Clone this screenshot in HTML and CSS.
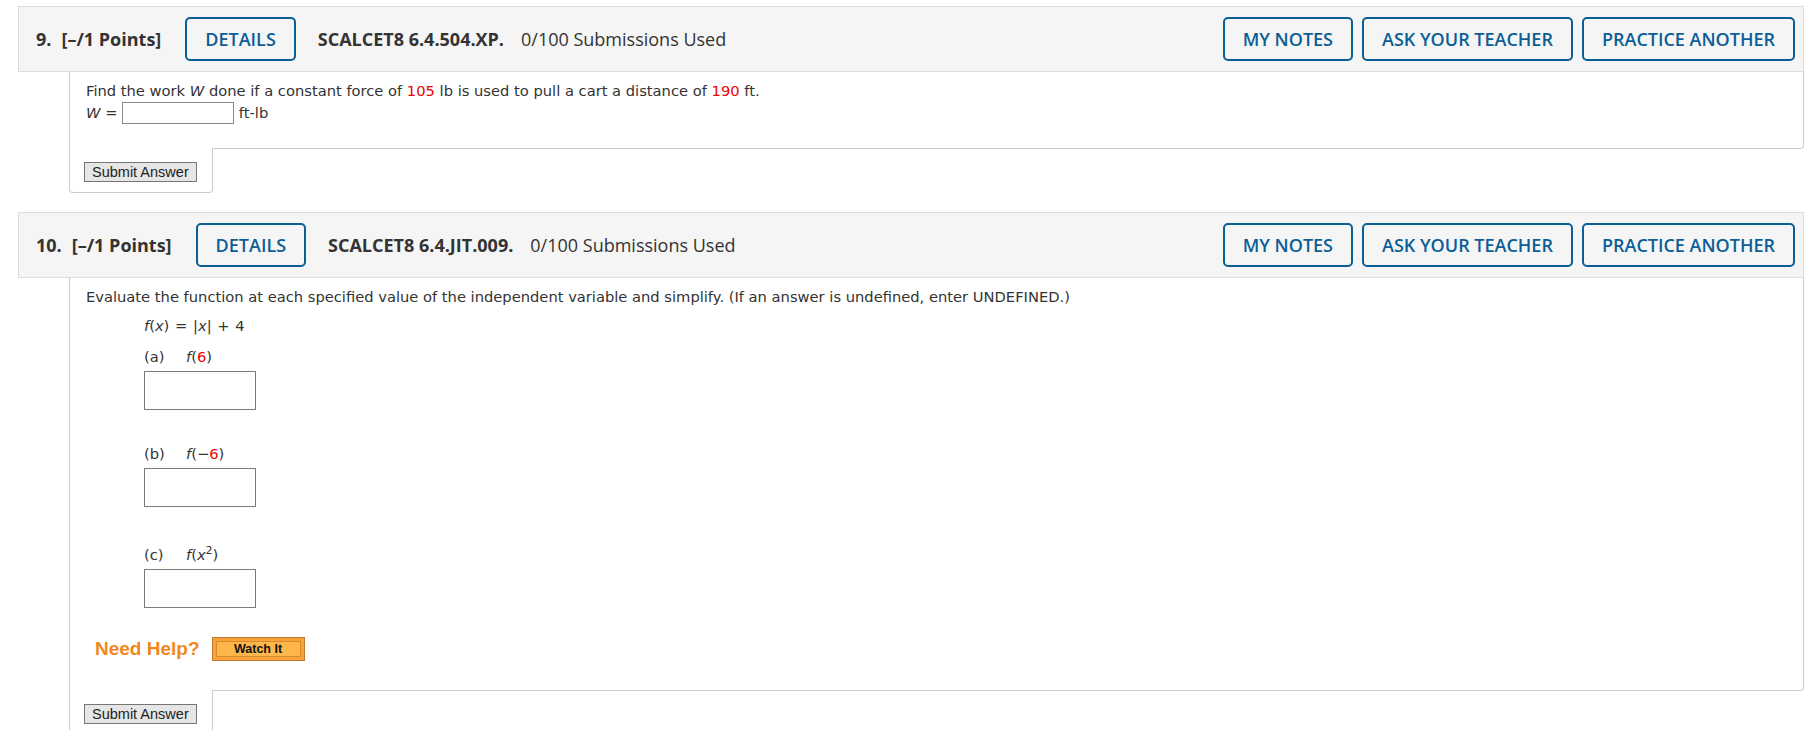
FILE: index.html
```html
<!DOCTYPE html>
<html lang="en">
  <head>
    <meta charset="UTF-8" />
    <title>Assignment</title>
    <link rel="stylesheet" href="styles.css">
  </head>
  <body>
    <!-- QUESTION 9 -->
    <div class="question">
      <div class="qhead">
        <span class="qnum">9.</span>
        <span class="qpts">[–/1 Points]</span>
        <button class="hbtn details">DETAILS</button>
        <span class="qcode">SCALCET8 6.4.504.XP.</span>
        <span class="qsubs">0/100 Submissions Used</span>
        <div class="hright">
          <button class="hbtn">MY NOTES</button>
          <button class="hbtn">ASK YOUR TEACHER</button>
          <button class="hbtn">PRACTICE ANOTHER</button>
        </div>
      </div>
      <div class="qbody q9">
        <div class="line">Find the work <i>W</i> done if a constant force of <span class="red">105</span> lb is used to pull a cart a distance of <span class="red">190</span> ft.</div>
        <div class="line answer-line"><i>W</i>&nbsp;=&nbsp;<input class="small-input" type="text" />&nbsp;ft-lb</div>
      </div>
      <div class="qfoot">
        <button class="submit">Submit Answer</button>
      </div>
    </div>

    <!-- QUESTION 10 -->
    <div class="question">
      <div class="qhead">
        <span class="qnum">10.</span>
        <span class="qpts">[–/1 Points]</span>
        <button class="hbtn details">DETAILS</button>
        <span class="qcode">SCALCET8 6.4.JIT.009.</span>
        <span class="qsubs">0/100 Submissions Used</span>
        <div class="hright">
          <button class="hbtn">MY NOTES</button>
          <button class="hbtn">ASK YOUR TEACHER</button>
          <button class="hbtn">PRACTICE ANOTHER</button>
        </div>
      </div>
      <div class="qbody q10">
        <div class="line">Evaluate the function at each specified value of the independent variable and simplify. (If an answer is undefined, enter UNDEFINED.)</div>
        <div class="math">
          <div class="line func"><i>f</i>(<i>x</i>) = |<i>x</i>| + 4</div>

          <div class="part part-a">
            <div class="line"><span class="plabel">(a)</span><i>f</i>(<span class="red">6</span>)</div>
            <input class="box-input" type="text" />
          </div>

          <div class="part part-b">
            <div class="line"><span class="plabel">(b)</span><i>f</i>(−<span class="red">6</span>)</div>
            <input class="box-input" type="text" />
          </div>

          <div class="part part-c">
            <div class="line"><span class="plabel">(c)</span><i>f</i>(<i>x</i><sup>2</sup>)</div>
            <input class="box-input" type="text" />
          </div>
        </div>

        <div class="help">
          <span class="need-help">Need Help?</span>
          <button class="watch"><span>Watch It</span></button>
        </div>
      </div>
      <div class="qfoot">
        <button class="submit">Submit Answer</button>
      </div>
    </div>
  </body>
</html>
```

FILE: styles.css
```css
html,
body {
  margin: 0;
  background: #fff;
}

body {
  padding: 6px 11px 0 18px;
  font-family: "DejaVu Sans", Verdana, sans-serif;
  font-size: 14.7px;
  color: #333;
}

.question {
  margin-bottom: 19px;
}

/* header bar */
.qhead {
  display: flex;
  align-items: center;
  height: 64px;
  padding: 0 8px 0 17px;
  background-color: #f5f5f5;
  border: 1px solid #dcdcdc;
  font-family: "Open Sans", sans-serif;
  font-size: 18px;
  color: #333;
}

.qnum {
  font-weight: 700;
  margin-right: 10px;
}

.qpts {
  font-weight: 700;
}

.qcode {
  font-weight: 700;
  margin-right: 17px;
}

.hbtn {
  height: 44px;
  padding: 0 18px;
  border: 2px solid #0b5e96;
  border-radius: 5px;
  background: transparent;
  color: #0b5e96;
  font-family: "Open Sans", sans-serif;
  font-size: 18px;
  font-weight: 600;
}

.details {
  margin: 0 22px 0 24px;
}

.hright {
  margin-left: auto;
  display: flex;
  gap: 9px;
}

/* question body */
.qbody {
  margin-left: 51px;
  border: 1px solid #ccc;
  border-top: 0;
  border-radius: 0 0 4px 0;
  padding: 10px 16px 24px;
}

.line {
  line-height: 18px;
}

.red {
  color: #e00;
}

.answer-line {
  display: flex;
  align-items: center;
  height: 22px;
  margin-top: 2px;
}

.small-input {
  width: 112px;
  height: 22px;
  box-sizing: border-box;
  border: 1px solid #8a8a8a;
  margin: 0;
  padding: 0;
}

.q10 {
  padding-bottom: 29px;
}

.math {
  padding-left: 58px;
}

.func {
  margin-top: 11px;
  word-spacing: 1px;
}

.part-a {
  margin-top: 13px;
}

.part-b {
  margin-top: 35px;
}

.part-c {
  margin-top: 39px;
}

.plabel {
  display: inline-block;
  width: 42px;
}

sup {
  font-size: 11px;
  line-height: 0;
}

.box-input {
  display: block;
  width: 112px;
  height: 39px;
  box-sizing: border-box;
  margin: 5px 0 0;
  border: 1px solid #7a7a7a;
  padding: 0;
}

.help {
  display: flex;
  align-items: center;
  margin-top: 29px;
  padding-left: 9px;
  height: 24px;
}

.need-help {
  font-family: "Liberation Sans", Arial, sans-serif;
  font-weight: bold;
  font-size: 19px;
  color: #f0891a;
  margin-right: 12px;
}

.watch {
  width: 93px;
  height: 24px;
  padding: 3px;
  border: 1px solid #c2782e;
  background: #f9a23a;
}

.watch span {
  display: block;
  height: 100%;
  box-sizing: border-box;
  border: 1px solid #d68a2e;
  background: #ffb64a;
  font-family: "Liberation Sans", Arial, sans-serif;
  font-weight: bold;
  font-size: 12.5px;
  line-height: 14px;
  color: #111;
}

/* footer tab with submit button */
.qfoot {
  margin: -1px 0 0 51px;
  width: 144px;
  box-sizing: border-box;
  padding: 14px 14px 10px;
  background: #fff;
  border: 1px solid #ccc;
  border-top: 0;
  border-radius: 0 0 4px 4px;
}

.submit {
  display: block;
  height: 20px;
  padding: 0 7px;
  border: 1px solid #767676;
  background: #e6e6e6;
  font-family: "Liberation Sans", Arial, sans-serif;
  font-size: 14.5px;
  line-height: 18px;
  color: #222;
}
```
